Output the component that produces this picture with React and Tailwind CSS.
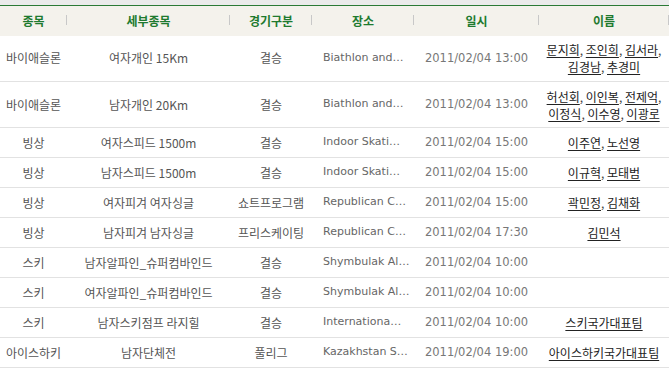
import React from "react";

const rows = [
  { sport: "바이애슬론", event: "여자개인 15Km", stage: "결승", place: "Biathlon and…", date: "2011/02/04 13:00", names: [["문지희", "조인희", "김서라"], ["김경남", "추경미"]], tall: true },
  { sport: "바이애슬론", event: "남자개인 20Km", stage: "결승", place: "Biathlon and…", date: "2011/02/04 13:00", names: [["허선회", "이인복", "전제억"], ["이정식", "이수영", "이광로"]], tall: true },
  { sport: "빙상", event: "여자스피드 1500m", stage: "결승", place: "Indoor Skati…", date: "2011/02/04 15:00", names: [["이주연", "노선영"]] },
  { sport: "빙상", event: "남자스피드 1500m", stage: "결승", place: "Indoor Skati…", date: "2011/02/04 15:00", names: [["이규혁", "모태범"]] },
  { sport: "빙상", event: "여자피겨 여자싱글", stage: "쇼트프로그램", place: "Republican C…", date: "2011/02/04 15:00", names: [["곽민정", "김채화"]] },
  { sport: "빙상", event: "남자피겨 남자싱글", stage: "프리스케이팅", place: "Republican C…", date: "2011/02/04 17:30", names: [["김민석"]] },
  { sport: "스키", event: "남자알파인_슈퍼컴바인드", stage: "결승", place: "Shymbulak Al…", date: "2011/02/04 10:00", names: [] },
  { sport: "스키", event: "여자알파인_슈퍼컴바인드", stage: "결승", place: "Shymbulak Al…", date: "2011/02/04 10:00", names: [] },
  { sport: "스키", event: "남자스키점프 라지힐", stage: "결승", place: "Internationa…", date: "2011/02/04 10:00", names: [["스키국가대표팀"]] },
  { sport: "아이스하키", event: "남자단체전", stage: "풀리그", place: "Kazakhstan S…", date: "2011/02/04 19:00", names: [["아이스하키국가대표팀"]] },
];

const headers = ["종목", "세부종목", "경기구분", "장소", "일시", "이름"];
const widths = ["w-[67px]", "w-[163px]", "w-[82px]", "w-[102px]", "w-[125px]", "w-[130px]"];

function Names({ lines }) {
  return (
    <div className="flex flex-col items-center leading-[17px]">
      {lines.map((line, i) => {
        const last = i === lines.length - 1;
        return (
          <div key={i} className="whitespace-nowrap">
            {line.map((n, j) => (
              <React.Fragment key={j}>
                <a className="underline text-[#222] underline-offset-[2px]">{n}</a>
                {(j < line.length - 1 || !last) && <span>, </span>}
              </React.Fragment>
            ))}
          </div>
        );
      })}
    </div>
  );
}

export default function App() {
  const kr = "font-['Noto_Sans_CJK_KR',sans-serif]";
  const vd = "font-['DejaVu_Sans','Noto_Sans_CJK_KR',sans-serif]";
  return (
    <div className="w-[669px] h-[369px] bg-white overflow-hidden">
      <div className="h-[5px] bg-[#ebebeb]" />
      <table className="table-fixed border-collapse w-[669px]">
        <colgroup>
          {widths.map((w, i) => (
            <col key={i} className={w} />
          ))}
        </colgroup>
        <thead>
          <tr className="h-[30px] bg-[#f4f2ec] border-t border-[#2b7a36]">
            {headers.map((h, i) => (
              <th key={i} className={`relative p-0 text-center text-[12px] font-bold text-[#1e7a2f] ${kr}`}>
                {h}
                <span className="absolute right-0 top-[9px] h-[10px] w-px bg-[#c8c8c8]" />
              </th>
            ))}
          </tr>
        </thead>
        <tbody>
          {rows.map((r, i) => (
            <tr key={i} className={`${r.tall ? "h-[46px]" : "h-[30px]"} border-b border-[#e2e2e2]`}>
              <td className={`p-0 text-center text-[12px] text-[#555] whitespace-nowrap ${kr}`}>{r.sport}</td>
              <td className={`p-0 text-center text-[12px] text-[#555] whitespace-nowrap ${kr}`}>{r.event}</td>
              <td className={`p-0 text-center text-[12px] text-[#555] whitespace-nowrap ${kr}`}>{r.stage}</td>
              <td className={`p-0 pl-[11px] text-left text-[11px] text-[#666] whitespace-nowrap ${vd}`}>{r.place}</td>
              <td className={`p-0 text-center text-[11.5px] text-[#777] whitespace-nowrap ${vd}`}>{r.date}</td>
              <td className={`p-0 text-center text-[12px] text-[#444] ${kr}`}>
                {r.names.length > 0 && <Names lines={r.names} />}
              </td>
            </tr>
          ))}
        </tbody>
      </table>
    </div>
  );
}
